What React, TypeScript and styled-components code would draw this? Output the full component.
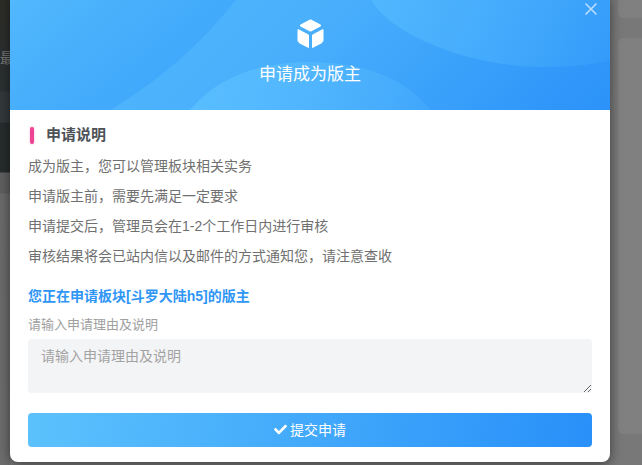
import React from 'react';
import styled, {createGlobalStyle} from 'styled-components';
import {FaCheck} from 'react-icons/fa';

const GlobalStyle = createGlobalStyle`
	html, body {
		margin: 0;
		padding: 0;
		width: 642px;
		height: 465px;
		overflow: hidden;
		background: #777;
	}
	* {
		box-sizing: border-box;
	}
`;

const Page = styled.div`
	position: relative;
	width: 642px;
	height: 465px;
	overflow: hidden;
	background: #787878;
	font-family: 'Liberation Sans', 'Noto Sans CJK SC', sans-serif;
`;

const BackdropLeft = styled.div`
	position: absolute;
	left: 0;
	top: 0;
	width: 10px;
	height: 465px;
	background: linear-gradient(
		180deg,
		#2d2d28 0,
		#2a3031 91px,
		#33383a 92px,
		#33383a 122px,
		#272c2d 123px,
		#272c2d 172px,
		#5f5f5f 173px,
		#5f5f5f 193px,
		#6a6a6a 194px,
		#6d6d6d 100%
	);
`;

const BackdropText = styled.span`
	position: absolute;
	left: 0;
	top: 50px;
	font-size: 14px;
	line-height: 16px;
	color: #777;
`;

const BackdropCard = styled.div<{$top: number; $height: number}>`
	position: absolute;
	left: 618px;
	top: ${({$top}) => $top}px;
	width: 40px;
	height: ${({$height}) => $height}px;
	border-radius: 6px;
	background: #808080;
`;

const Modal = styled.div`
	position: absolute;
	left: 10px;
	top: -8px;
	width: 600px;
	height: 470px;
	background: #fff;
	border-radius: 8px;
	overflow: hidden;
	box-shadow: 0 2px 12px rgba(0, 0, 0, 0.5);
	display: flex;
	flex-direction: column;
`;

const Header = styled.div`
	position: relative;
	height: 118px;
	flex: none;
	overflow: hidden;
	background: linear-gradient(135deg, #52b9fd 0%, #4ab0fc 45%, #2b92f9 100%);
	display: flex;
	flex-direction: column;
	align-items: center;
	color: #fff;
`;

const HeaderWaves = styled.svg`
	position: absolute;
	left: 0;
	top: 8px;
	width: 600px;
	height: 110px;
`;

const CloseIcon = styled.svg`
	position: absolute;
	right: 12px;
	top: 10px;
	width: 14px;
	height: 14px;
`;

const CubeIcon = styled.svg`
	position: relative;
	width: 27px;
	height: 30px;
	margin-top: 27px;
`;

const HeaderTitle = styled.div`
	position: relative;
	margin-top: 14px;
	font-size: 17px;
	line-height: 24px;
`;

const Body = styled.div`
	flex: 1;
	padding: 11px 18px 0;
	display: flex;
	flex-direction: column;
`;

const SectionTitle = styled.div`
	display: flex;
	align-items: center;
	height: 24px;
	font-size: 15px;
	font-weight: 700;
	color: #4d5257;
`;

const PinkBar = styled.span`
	width: 4px;
	height: 17px;
	margin: 4px 12px 0 2px;
	border-radius: 3px;
	background: #ee4394;
	box-shadow: 0 0 2px rgba(238, 67, 148, 0.5);
`;

const Notes = styled.div`
	margin-top: 6px;
`;

const Note = styled.div`
	height: 30px;
	font-size: 14px;
	line-height: 30px;
	color: #707070;
`;

const ForumLine = styled.div`
	margin-top: 15px;
	font-size: 14px;
	line-height: 20px;
	font-weight: 700;
	color: #2f96f5;
`;

const FieldLabel = styled.div`
	margin-top: 9px;
	font-size: 13px;
	line-height: 20px;
	color: #a0a0a0;
`;

const ReasonInput = styled.textarea`
	display: block;
	width: 100%;
	height: 54px;
	margin-top: 4px;
	padding: 8px 13px;
	border: 0;
	outline: 0;
	border-radius: 4px;
	background: #f3f4f6;
	font-family: inherit;
	font-size: 14px;
	line-height: 19px;
	color: #666;
	&::placeholder {
		color: #a3a3a3;
		opacity: 1;
	}
`;

const SubmitButton = styled.button`
	display: flex;
	align-items: center;
	justify-content: center;
	gap: 3px;
	width: 100%;
	height: 34px;
	margin-top: 20px;
	padding: 0 0 2px;
	border: 0;
	border-radius: 4px;
	background: linear-gradient(100deg, #5cc2fd 0%, #2890f9 100%);
	font-family: inherit;
	font-size: 14px;
	color: #fff;
`;

const notes = [
	'成为版主，您可以管理板块相关实务',
	'申请版主前，需要先满足一定要求',
	'申请提交后，管理员会在1-2个工作日内进行审核',
	'审核结果将会已站内信以及邮件的方式通知您，请注意查收',
];

export default function App() {
	return (
		<Page>
			<GlobalStyle />
			<BackdropLeft>
				<BackdropText>最</BackdropText>
			</BackdropLeft>
			<BackdropCard $top={-40} $height={58} />
			<BackdropCard $top={38} $height={396} />
			<Modal>
				<Header>
					<HeaderWaves viewBox="0 0 600 110">
						<defs>
							<linearGradient id="leftWave" x1="0" y1="0" x2="1" y2="0.6">
								<stop offset="0" stopColor="#3ea6fb" stopOpacity="0" />
								<stop offset="1" stopColor="#3ea6fb" stopOpacity="0.95" />
							</linearGradient>
							<linearGradient id="rightWave" x1="0" y1="0" x2="1" y2="0">
								<stop offset="0" stopColor="#57bdff" stopOpacity="0.6" />
								<stop offset="1" stopColor="#57bdff" stopOpacity="0.12" />
							</linearGradient>
							<linearGradient id="humpWave" x1="0" y1="0" x2="1" y2="0">
								<stop offset="0" stopColor="#5cc0ff" stopOpacity="0.8" />
								<stop offset="1" stopColor="#5cc0ff" stopOpacity="0.2" />
							</linearGradient>
						</defs>
						<path d="M226 0C190 45 150 80 100 110H0V0Z" fill="url(#leftWave)" />
						<path d="M361 0C385 40 470 67 530 67C560 67 585 64 600 61V0Z" fill="url(#rightWave)" />
						<path d="M180 110C205 80 245 62 300 62C345 62 395 75 420 110Z" fill="url(#humpWave)" />
					</HeaderWaves>
					<CloseIcon viewBox="0 0 14 14">
						<path d="M1.5 1.5L12.5 12.5M12.5 1.5L1.5 12.5" stroke="#fff" strokeOpacity="0.65" strokeWidth="1.6" fill="none" />
					</CloseIcon>
					<CubeIcon viewBox="0 0 27 30">
						<path d="M13.5 1.5L23 6.5 13.5 11.5 4 6.5Z" fill="#fff" stroke="#fff" strokeWidth="2" strokeLinejoin="round" />
						<path d="M1 10.5L11.5 16V28.5L2.8 24C1.6 23.4 1 22.4 1 21Z" fill="#fff" stroke="#fff" strokeWidth="1" strokeLinejoin="round" />
						<path d="M26 10.5L15.5 16V28.5L24.2 24C25.4 23.4 26 22.4 26 21Z" fill="#fff" stroke="#fff" strokeWidth="1" strokeLinejoin="round" />
					</CubeIcon>
					<HeaderTitle>申请成为版主</HeaderTitle>
				</Header>
				<Body>
					<SectionTitle>
						<PinkBar />
						申请说明
					</SectionTitle>
					<Notes>
						{notes.map((note) => (
							<Note key={note}>{note}</Note>
						))}
					</Notes>
					<ForumLine>您正在申请板块[斗罗大陆h5]的版主</ForumLine>
					<FieldLabel>请输入申请理由及说明</FieldLabel>
					<ReasonInput placeholder="请输入申请理由及说明" />
					<SubmitButton>
						<FaCheck size={13} />
						提交申请
					</SubmitButton>
				</Body>
			</Modal>
		</Page>
	);
}
